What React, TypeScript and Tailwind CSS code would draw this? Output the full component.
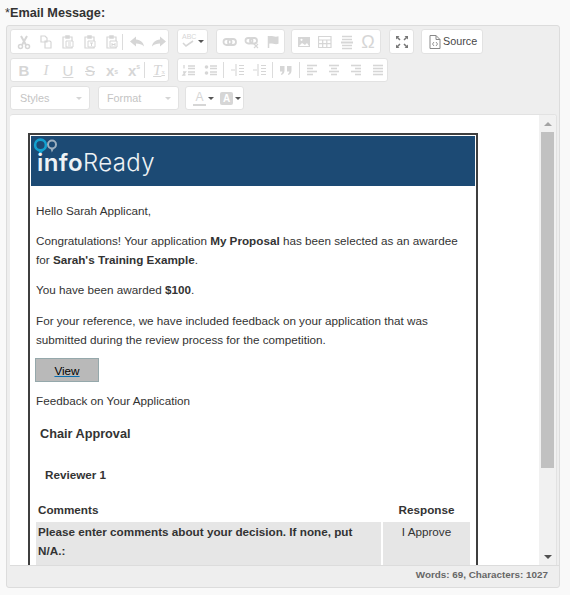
import type { ReactNode } from "react";

const G = "#d6d6d6";

const Ico = ({ children, w = 16, c = G }: { children: ReactNode; w?: number; c?: string }) => (
  <svg width={w} height={16} viewBox={`0 0 ${w} 16`} fill="none" stroke={c} strokeWidth="1.5" className="shrink-0">
    {children}
  </svg>
);

const Group = ({ children, className = "" }: { children: ReactNode; className?: string }) => (
  <div className={`flex items-center rounded-[3px] border border-[#e2e2e2] bg-white ${className}`}>{children}</div>
);

const Sep = ({ className = "" }: { className?: string }) => <div className={`h-[16px] w-px shrink-0 bg-[#dcdcdc] ${className}`} />;

const Lines = ({ rows }: { rows: number[][] }) => (
  <Ico>
    {rows.map(([a, b], i) => (
      <path key={i} d={`M${a} ${3.5 + i * 3}H${b}`} strokeWidth="1.6" />
    ))}
  </Ico>
);

const Letter = ({ children, className = "" }: { children: ReactNode; className?: string }) => (
  <span className={`flex h-4 w-4 shrink-0 items-center justify-center text-[15px] leading-none text-[#d6d6d6] ${className}`}>
    {children}
  </span>
);

const Combo = ({ label, className }: { label: string; className: string }) => (
  <Group className={`h-[24px] justify-between pr-[7px] ${className}`}>
    <span className="text-[10.8px] text-[#c4c4c4]">{label}</span>
    <span className="h-0 w-0 border-x-[3px] border-t-[3px] border-x-transparent border-t-[#d5d5d5]" />
  </Group>
);

const Caret = () => <span className="h-0 w-0 shrink-0 border-x-[3px] border-t-[3px] border-x-transparent border-t-[#555]" />;

const Paste = ({ mark }: { mark: string }) => (
  <Ico>
    <path d="M3 3h9v11H3z" strokeWidth="1.2" />
    <path d="M6 2h3v2H6z" fill={G} />
    <path d={`M6 7h7v6H6z${mark}`} fill="#fff" strokeWidth="1" />
  </Ico>
);

const Indent = () => (
  <Ico>
    <path d="M6 2v12M9 3.5h5M9 6.5h5M9 9.5h5M9 12.5h5M1 8h4" strokeWidth="1.1" />
  </Ico>
);

const App = () => {
  return (
    <div className="h-[595px] w-[570px] overflow-hidden bg-[#f9f9f9] font-['Liberation_Sans',Arial,sans-serif]">
      <div className="pt-[5px] pl-[5px] text-[12.7px] leading-[16px] font-bold text-[#333]">
        <span className="font-normal">*</span>Email Message:
      </div>
      <div className="mt-[4px] ml-[6px] h-[563px] w-[554px] rounded-[3px] border border-[#dcdcdc] bg-[#eeeeee] pt-[3px] pl-[3px]">
        {/* toolbar */}
        <div className="flex h-[25px] items-stretch">
          <Group className="w-[159px] gap-[6px] pl-[5px]">
            <Ico>
              <circle cx="4.5" cy="12.5" r="2" />
              <circle cx="11.5" cy="12.5" r="2" />
              <path d="M5 2l5 9M11 2l-5 9" strokeWidth="2" />
            </Ico>
            <Ico>
              <path d="M3 2h4l2 2v4H3zM7 7h5l1 1v6H7z" strokeWidth="1.2" />
            </Ico>
            <Paste mark="M8 9h3M8 11h3" />
            <Paste mark="M8 9h3M9.5 9v3" />
            <Paste mark="M8 9v3M11 9v3M8 10.5h3" />
            <Sep className="-ml-[4px]" />
            <Ico>
              <path d="M7 2.5L1 7.5l6 5V9.5c3 0 6 .8 8 3-.5-4-3-6.5-8-7z" fill={G} stroke="none" />
            </Ico>
            <Ico>
              <path d="M9 2.5l6 5-6 5V9.5c-3 0-6 .8-8 3 .5-4 3-6.5 8-7z" fill={G} stroke="none" />
            </Ico>
          </Group>
          <Group className="ml-[8px] w-[31px] justify-center gap-[1px]">
            <span className="relative h-4 w-4">
              <span className="absolute top-[-1px] left-[1px] text-[7px] leading-[8px] text-[#d6d6d6]">ABC</span>
              <svg className="absolute top-[4px] left-0" width="16" height="10" fill="none" stroke={G} strokeWidth="1.6">
                <path d="M2 5l3 3 7-5" />
              </svg>
            </span>
            <Caret />
          </Group>
          <Group className="ml-[8px] w-[69px] gap-[6px] pl-[5px]">
            <Ico>
              <rect x="1.5" y="5" width="8" height="6" rx="3" strokeWidth="1.8" />
              <rect x="6" y="5" width="8" height="6" rx="3" strokeWidth="1.8" />
            </Ico>
            <Ico>
              <rect x="1.5" y="4" width="7" height="5.5" rx="2.7" strokeWidth="1.8" />
              <rect x="6" y="4" width="7" height="5.5" rx="2.7" strokeWidth="1.8" />
              <path d="M10 10l4 4M14 10l-4 4" strokeWidth="1.2" />
            </Ico>
            <Ico>
              <path d="M2.5 2v12" />
              <path d="M2.5 2.5c3-1.5 6 1.2 10-.2v7.5c-4 1.2-7-1.2-10 .2z" fill={G} stroke="none" />
            </Ico>
          </Group>
          <Group className="ml-[6px] w-[90px] gap-[5px] pl-[5px]">
            <Ico>
              <rect x="1" y="3" width="12" height="10" fill={G} stroke="none" />
              <path d="M2 12l3-3 3 2 2-2 2 3z" fill="#fff" stroke="none" />
              <circle cx="4.5" cy="5.8" r="1.1" fill="#fff" stroke="none" />
            </Ico>
            <Ico>
              <path d="M.5 2.5h12.5v11H.5zM.5 6h12.5M.5 9.7h12.5M4.7 6v7.5M8.8 6v7.5" strokeWidth="1.2" />
            </Ico>
            <Ico>
              <path d="M3 2.5h10M3 5.5h10" strokeWidth="1.6" />
              <path d="M2 8.5h12" strokeWidth="2" />
              <path d="M3 11.5h10M3 14.5h10" strokeWidth="1.6" />
            </Ico>
            <Letter className="text-[18px]">Ω</Letter>
          </Group>
          <Group className="ml-[8px] w-[25px] justify-center">
            <Ico c="#777">
              <path d="M2 2h3.5L2 5.5zM14 2v3.5L10.5 2zM2 14v-3.5L5.5 14zM14 14h-3.5L14 10.5z" fill="#777" stroke="none" />
              <path d="M3 3l3 3M13 3l-3 3M3 13l3-3M13 13l-3-3" />
            </Ico>
          </Group>
          <Group className="ml-[7px] w-[62px] pl-[5px]">
            <Ico c="#888">
              <path d="M3 1.5h6l4 4v9H3zM9 1.5v4h4" strokeWidth="1" />
              <path d="M7 8l-1.5 2L7 12M9 8l1.5 2L9 12" strokeWidth="0.9" />
            </Ico>
            <span className="text-[10.8px] text-[#474747]">Source</span>
          </Group>
        </div>
        <div className="mt-[4px] flex h-[24px] items-stretch">
          <Group className="w-[159px] gap-[6px] pl-[5px]">
            <Letter className="font-bold">B</Letter>
            <Letter className="font-['Liberation_Serif'] italic">I</Letter>
            <Letter className="underline">U</Letter>
            <Letter className="line-through">S</Letter>
            <Letter className="text-[13px] font-bold">
              x<sub className="text-[7px]">s</sub>
            </Letter>
            <Letter className="text-[13px] font-bold">
              x<sup className="text-[7px]">s</sup>
            </Letter>
            <Sep className="-ml-[4px]" />
            <Letter className="font-['Liberation_Serif'] italic underline">
              T<sub className="text-[7px] not-italic">x</sub>
            </Letter>
          </Group>
          <Group className="ml-[8px] w-[211px] gap-[6px] pl-[3px]">
            <Ico>
              <path d="M7 4h7M7 6.5h7M7 10h7M7 12.5h7M3 3v3.5M2 10h2.5l-2.5 3h2.5" strokeWidth="1.3" />
            </Ico>
            <Ico>
              <circle cx="3.5" cy="5" r="1.8" fill={G} stroke="none" />
              <circle cx="3.5" cy="11" r="1.8" fill={G} stroke="none" />
              <path d="M7 4h7M7 6.5h7M7 10h7M7 12.5h7" strokeWidth="1.3" />
            </Ico>
            <Sep className="-ml-[2px]" />
            <Indent />
            <Indent />
            <Sep className="-ml-[2px]" />
            <Ico>
              <path d="M1 4h4.5v4.5c0 2-1 3.5-3 4.5l-.7-1c1-.6 1.5-1.4 1.6-2.5H1zM8 4h4.5v4.5c0 2-1 3.5-3 4.5l-.7-1c1-.6 1.5-1.4 1.6-2.5H8z" fill={G} stroke="none" />
            </Ico>
            <Sep className="-ml-[2px]" />
            <Lines rows={[[1, 11], [1, 7], [1, 11], [1, 7]]} />
            <Lines rows={[[1, 11], [3, 9], [1, 11], [3, 9]]} />
            <Lines rows={[[1, 11], [5, 11], [1, 11], [5, 11]]} />
            <Lines rows={[[1, 11], [1, 11], [1, 11], [1, 11]]} />
          </Group>
        </div>
        <div className="mt-[4px] flex items-stretch">
          <Combo label="Styles" className="w-[80px] pl-[9px]" />
          <Combo label="Format" className="ml-[8px] w-[81px] pl-[8px]" />
          <Group className="ml-[6px] h-[24px] w-[59px] pl-[7px]">
            <span className="w-[13px] border-b-2 border-[#d6d6d6] text-center text-[12px] leading-[13px] text-[#d6d6d6]">A</span>
            <span className="ml-[2px] flex">
              <Caret />
            </span>
            <span className="ml-[6px] flex h-[13px] w-[13px] items-center justify-center rounded-[2px] bg-[#d6d6d6] text-[10px] font-bold text-white">
              A
            </span>
            <span className="ml-[2px] flex">
              <Caret />
            </span>
          </Group>
        </div>
        {/* editing area */}
        <div className="mt-[4px] flex h-[451px] w-[547px] overflow-hidden rounded-t-[3px] border-t border-r border-[#e2e2e2] bg-white">
          <div className="flex-1 overflow-hidden pt-[18px] pl-[18px]">
            <div className="w-[450px] border-2 border-b-0 border-[#3f3f3f] px-px pt-px text-[11.7px] leading-[19px] text-[#333]">
              <div className="flex h-[50px] bg-[#1c4a74]">
                <div className="relative h-full w-[160px]">
                  <svg className="absolute top-[1px] left-0" width="28" height="18" fill="none">
                    <path d="M8 13l1.5 4 2-4" stroke="#12a0cf" strokeWidth="1.4" />
                    <path d="M20 11l1 3 1.5-3" stroke="#9db0bf" strokeWidth="1.2" />
                    <circle cx="21" cy="7.5" r="4" stroke="#9db0bf" strokeWidth="2" />
                    <circle cx="9.5" cy="8" r="5.4" stroke="#12a0cf" strokeWidth="2.6" />
                  </svg>
                  <span className="absolute top-[15px] left-[6px] font-['Inter',sans-serif] text-[24px] leading-[24px] tracking-[0.4px] text-[#eef2f5]">
                    <span className="font-semibold">info</span>
                    <span className="font-light">Ready</span>
                  </span>
                </div>
              </div>
              <div className="px-[5px]">
                <p className="mt-[15px]">Hello Sarah Applicant,</p>
                <p className="mt-[11px]">
                  Congratulations! Your application <b>My Proposal</b> has been selected as an awardee for{" "}
                  <b>Sarah's Training Example</b>.
                </p>
                <p className="mt-[11px]">
                  You have been awarded <b>$100</b>.
                </p>
                <p className="mt-[12px]">
                  For your reference, we have included feedback on your application that was submitted during the review
                  process for the competition.
                </p>
                <div className="mt-[9px] -ml-px flex h-[24px] w-[64px] items-center justify-center border border-[#95a8ab] bg-[#b9b9b9]">
                  <span className="text-black underline decoration-[#0b6fb0]">View</span>
                </div>
                <p className="mt-[9px]">Feedback on Your Application</p>
                <p className="mt-[15px] ml-[4px] text-[12.7px] font-bold">Chair Approval</p>
                <p className="mt-[21px] ml-[9px] font-bold">Reviewer 1</p>
                <div className="mt-[16px] flex font-bold">
                  <div className="w-[347px] pl-[2px]">Comments</div>
                  <div className="w-[87px] text-center">Response</div>
                </div>
                <div className="mt-[3px] flex h-[60px] gap-[2px]">
                  <div className="w-[345px] bg-[#e6e6e6] pl-[2px] font-bold">
                    Please enter comments about your decision. If none, put
                    <br />
                    N/A.:
                  </div>
                  <div className="w-[87px] bg-[#e6e6e6] text-center">I Approve</div>
                </div>
              </div>
            </div>
          </div>
          {/* scrollbar */}
          <div className="flex w-[17px] flex-col items-center bg-[#f1f1f1]">
            <div className="flex h-[17px] items-center">
              <span className="h-0 w-0 border-x-[4px] border-b-[4px] border-x-transparent border-b-[#a3a3a3]" />
            </div>
            <div className="h-[336px] w-[13px] bg-[#c1c1c1]" />
            <div className="flex-1" />
            <div className="flex h-[17px] items-center">
              <span className="h-0 w-0 border-x-[4px] border-t-[4px] border-x-transparent border-t-[#505050]" />
            </div>
          </div>
        </div>
        <div className="flex h-[20px] items-center justify-end border-t border-[#dcdcdc] pr-[11px] text-[9.85px] font-bold text-[#666]">
          Words: 69, Characters: 1027
        </div>
      </div>
    </div>
  );
};

export default App;
